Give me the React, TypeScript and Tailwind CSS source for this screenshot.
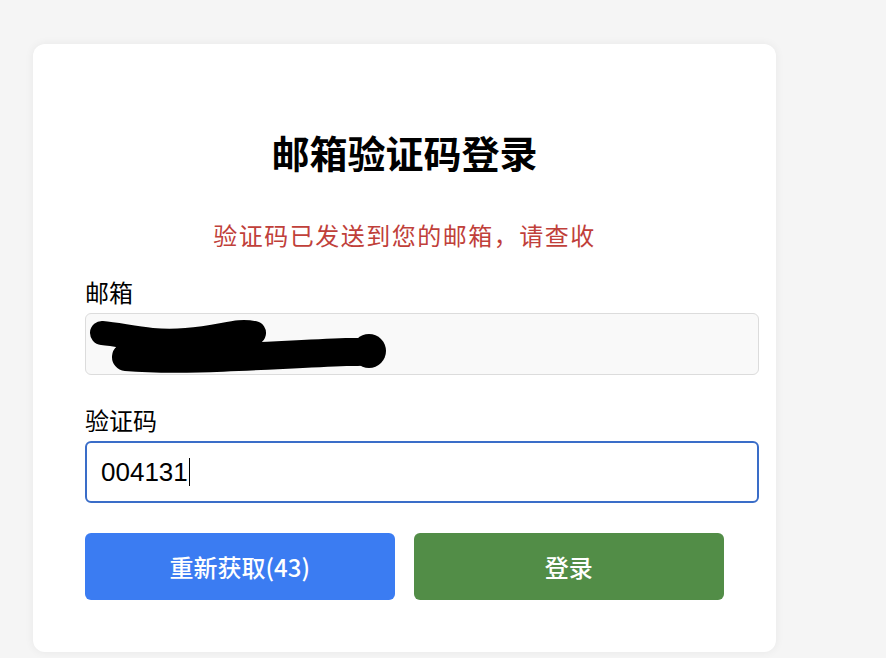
export default function App() {
  const font = { fontFamily: '"Liberation Sans", "Noto Sans CJK SC", sans-serif' };
  const cjk = { fontFamily: '"Noto Sans CJK SC", "Liberation Sans", sans-serif' };
  return (
    <div className="min-h-screen bg-[#f5f5f5] pt-[44px] pl-[33px]" style={font}>
      <div className="w-[743px] h-[608px] bg-white rounded-xl shadow-[0_0_10px_rgba(0,0,0,0.06)] px-[52px] pt-[89px] flex flex-col">
        <h1 className="text-[38px] leading-[44px] font-bold text-black text-center">邮箱验证码登录</h1>
        <p className="mt-[45px] text-[24px] leading-[30px] text-[#c0403a] text-center tracking-[1.5px]">验证码已发送到您的邮箱，请查收</p>
        <label className="mt-[27px] text-[24px] leading-[30px] text-black">邮箱</label>
        <div className="mt-[4px] w-[674px] h-[62px] shrink-0 rounded-md border border-[#dcdcdc] bg-[#f9f9f9] relative">
          <svg className="absolute left-0 top-0" width="674" height="62" viewBox="0 0 674 62">
            <path d="M 16 19 C 40 21, 62 29, 100 26 S 150 15, 168 19" stroke="#000" strokeWidth="24" fill="none" strokeLinecap="round" />
            <path d="M 40 43 C 100 48, 180 41, 260 38 L 272 38" stroke="#000" strokeWidth="28" fill="none" strokeLinecap="round" />
            <path d="M 30 30 L 170 30" stroke="#000" strokeWidth="16" fill="none" />
            <circle cx="283" cy="37" r="17" fill="#000" />
          </svg>
        </div>
        <label className="mt-[32px] text-[24px] leading-[30px] text-black">验证码</label>
        <div className="mt-[4px] w-[674px] h-[62px] shrink-0 rounded-md border-2 border-[#3a6dc8] bg-white flex items-center pl-[14px]">
          <span className="text-[26px] text-black">004131</span>
          <span className="w-px h-[28px] bg-black ml-[1px]" />
        </div>
        <div className="mt-[30px] flex gap-[19px]" style={cjk}>
          <button className="w-[310px] h-[67px] rounded-md bg-[#3b7cf2] text-white text-[24px] font-medium">重新获取(43)</button>
          <button className="w-[311px] h-[67px] rounded-md bg-[#528d47] text-white text-[24px] font-medium">登录</button>
        </div>
      </div>
    </div>
  );
}
